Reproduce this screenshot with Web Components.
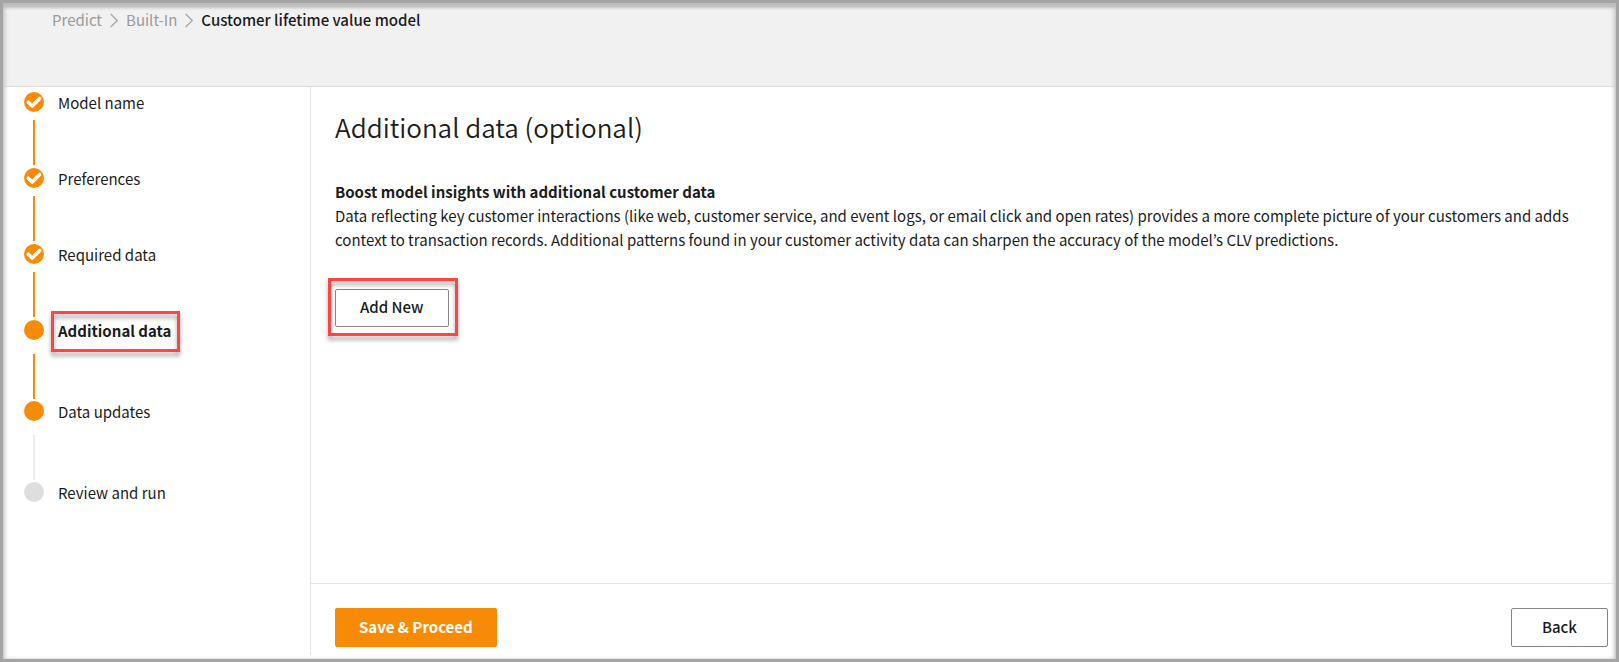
<!DOCTYPE html>
<html lang="en">
<head>
<meta charset="utf-8">
<title>Customer lifetime value model</title>
<style>
html, body { height: 100%; margin: 0; }
body {
  font-family: "Noto Sans CJK KR", "Noto Sans", sans-serif;
  font-size: 15px; line-height: 24px; color: #1c1c1c; background: #fff;
  --accent: #f88b06; --rule: #e6e6e6; --mark: #ff4444;
}
</style>
</head>
<body>
<app-frame>
  <crumb-trail slot="header">
    <a href="#predict">Predict</a>
    <a href="#built-in">Built-In</a>
    <span aria-current="page">Customer lifetime value model</span>
  </crumb-trail>
  <step-list slot="steps">
    <step-item state="done">Model name</step-item>
    <step-item state="done">Preferences</step-item>
    <step-item state="done">Required data</step-item>
    <step-item state="current"><focus-mark>Additional data</focus-mark></step-item>
    <step-item state="reached">Data updates</step-item>
    <step-item state="todo">Review and run</step-item>
  </step-list>
  <data-panel>
    <span slot="title">Additional data (optional)</span>
    <span slot="lead">Boost model insights with additional customer data</span>
    Data reflecting key customer interactions (like web, customer service, and event logs, or email click and open rates) provides a more complete picture of your customers and adds context to transaction records. Additional patterns found in your customer activity data can sharpen the accuracy of the model’s CLV predictions.
    <focus-mark slot="action" class="wide"><action-button>Add New</action-button></focus-mark>
  </data-panel>
  <action-button slot="footer" kind="primary">Save &amp; Proceed</action-button>
  <action-button slot="footer" kind="tall">Back</action-button>
</app-frame>

<script>
const define = (name, html, setup) => customElements.define(name, class extends HTMLElement {
  constructor() {
    super();
    this.attachShadow({ mode: "open" }).innerHTML = html;
  }
  connectedCallback() { if (setup) setup(this); }
});

define("app-frame", `
<style>
:host { display: grid; grid-template: auto 1fr / 308px 1fr; box-sizing: border-box; min-height: 100%; border: 3px solid #a4a4a4; position: relative; }
:host::after { content: ""; position: absolute; inset: 0; pointer-events: none; box-shadow: inset 0 5px 3px #bdbdbd, inset 3px 0 4px -1px #ccc, inset -3px 0 4px -1px #ccc; }
header { grid-column: 1 / 3; box-sizing: border-box; min-height: 84px; padding: 5px 49px; background: #f1f1f1; border-bottom: 1px solid #dcdcdc; }
nav { border-right: 1px solid var(--rule); margin-bottom: 4px; padding: 5px 21px; }
main { display: flex; flex-direction: column; }
section { flex: 1; padding: 22px 24px; }
footer { display: flex; justify-content: space-between; border-top: 1px solid var(--rule); padding: 24px 8px 12px 24px; }
</style>
<header><slot name="header"></slot></header>
<nav aria-label="Steps"><slot name="steps"></slot></nav>
<main><section><slot></slot></section><footer><slot name="footer"></slot></footer></main>`);

define("crumb-trail", `
<style>
:host { display: block; }
nav { display: flex; align-items: center; gap: 8px; }
::slotted(a) { color: #9a9a9a; text-decoration: none; }
::slotted(span) { font-weight: 500; }
svg { width: 8px; height: 15px; fill: none; stroke: #a5a5a5; stroke-width: 1.2; }
</style>
<nav aria-label="Breadcrumb"></nav>`, host => {
  const nav = host.shadowRoot.querySelector("nav");
  nav.innerHTML = [...host.children].map((child, i) => {
    child.slot = "crumb" + i;
    return (i ? '<svg viewBox="0 0 8 15" aria-hidden="true"><path d="M.7 1l6.6 6.5L.7 14"/></svg>' : "") + `<slot name="crumb${i}"></slot>`;
  }).join("");
});

define("step-list", `<style>:host { display: flex; flex-direction: column; }</style><slot></slot>`,
  host => host.setAttribute("role", "list"));

define("step-item", `
<style>
:host { display: grid; grid-template-columns: 20px 1fr; column-gap: 14px; height: 81px; line-height: 22px; }
:host([state="done"]) { height: 76px; }
:host(:last-child) { height: 20px; }
.rail { display: flex; flex-direction: column; align-items: center; gap: 14px; --dot: var(--accent); --line: var(--accent); }
:host([state="done"]) .rail { gap: 8px; }
:host([state="reached"]) .rail { --line: #ebebeb; }
:host([state="todo"]) .rail { --dot: #dedede; }
svg { width: 20px; height: 20px; flex: none; }
circle { fill: var(--dot); }
path { fill: none; stroke: #fff; stroke-width: 3.6; stroke-linecap: round; stroke-linejoin: round; display: none; }
:host([state="done"]) path { display: block; }
i { width: 2px; height: 45px; background: var(--line); }
:host(:last-child) i { display: none; }
:host([state="current"]) .label { font-weight: 700; }
</style>
<div class="rail"><svg viewBox="0 0 20 20" aria-hidden="true"><circle cx="10" cy="10" r="10"/><path d="M4.3 10.2l3.9 3.8 7.4-7.6"/></svg><i></i></div>
<div class="label"><slot></slot></div>`, host => host.setAttribute("role", "listitem"));

define("focus-mark", `
<style>
:host { display: inline-block; position: relative; }
:host::after { content: ""; position: absolute; inset: -9px -9px -10px -7px; border: 3px solid var(--mark); pointer-events: none; filter: drop-shadow(0 4px 2px rgba(0,0,0,.35)); }
:host(.wide)::after { inset: -11px -9px -9px -7px; }
</style><slot></slot>`);

define("data-panel", `
<style>
:host { display: block; }
h1 { margin: 0; font-size: 26px; line-height: 36px; font-weight: 350; }
h2 { margin: 35px 0 0; font-size: 15px; line-height: 24px; font-weight: 700; }
p { margin: 0 0 37px; }
</style>
<h1><slot name="title"></slot></h1>
<h2><slot name="lead"></slot></h2>
<p><slot></slot></p>
<slot name="action"></slot>`);

define("action-button", `
<style>
:host { display: block; }
button { display: block; height: 38px; padding: 0 24px 2px; font: inherit; font-weight: 500; color: inherit; background: #fff; border: 1px solid #868686; border-radius: 2px; cursor: pointer; }
:host([kind]) button { height: 39px; }
:host([kind="tall"]) button { padding: 0 30px 2px; }
:host([kind="primary"]) button { padding: 0 23px 2px; color: #fff; background: var(--accent); border-color: var(--accent); font-weight: 700; }
</style>
<button type="button"><slot></slot></button>`);
</script>
</body>
</html>
